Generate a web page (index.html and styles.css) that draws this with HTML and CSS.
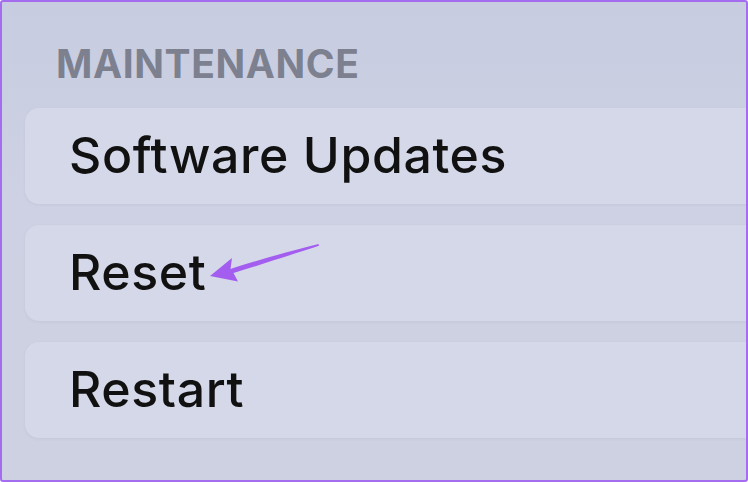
FILE: index.html
```html
<!DOCTYPE html>
<html>
<head>
<meta charset="utf-8">
<link rel="stylesheet" href="styles.css">
</head>
<body>
<div class="frame">
  <div class="section-title">MAINTENANCE</div>
  <div class="list">
    <div class="row"><span class="label">Software Updates</span></div>
    <div class="row"><span class="label">Reset</span>
      <svg class="arrow" width="120" height="45" viewBox="0 0 120 45">
        <path d="M5 35 L27 17 L25.5 28 C50 20 85 10 113.5 3 L114 4.8 C88 13 55 24 28.5 32 L33 40.5 Z" fill="#a35ef0"/>
      </svg>
    </div>
    <div class="row"><span class="label">Restart</span></div>
  </div>
</div>
</body>
</html>
```
FILE: styles.css
```css
html, body {
  margin: 0;
  padding: 0;
}
body {
  width: 748px;
  height: 482px;
  overflow: hidden;
  font-family: Inter, "Liberation Sans", sans-serif;
}
.frame {
  box-sizing: border-box;
  width: 748px;
  height: 482px;
  border: 2px solid #a46df0;
  border-radius: 3px;
  background: linear-gradient(180deg, #c8cce0 0%, #cdd1e3 40%, #cdd1e2 100%);
  overflow: hidden;
  padding: 38px 0 0 0;
}
.section-title {
  margin-left: 54px;
  font-weight: 700;
  font-size: 39px;
  line-height: 48px;
  letter-spacing: 0.6px;
  color: #7c808f;
}
.list {
  margin-top: 20px;
  padding-left: 23px;
  display: flex;
  flex-direction: column;
  gap: 21px;
}
.row {
  position: relative;
  height: 96px;
  margin-right: -30px;
  border-radius: 14px;
  background: #d4d8e8;
  box-shadow: 0 1px 3px rgba(90, 95, 130, 0.08);
  display: flex;
  align-items: center;
  padding-left: 44px;
}
.label {
  font-size: 50px;
  font-weight: 500;
  letter-spacing: 0.6px;
  color: #111;
  margin-top: -2px;
}
.arrow {
  position: absolute;
  left: 180px;
  top: 16px;
}
```
